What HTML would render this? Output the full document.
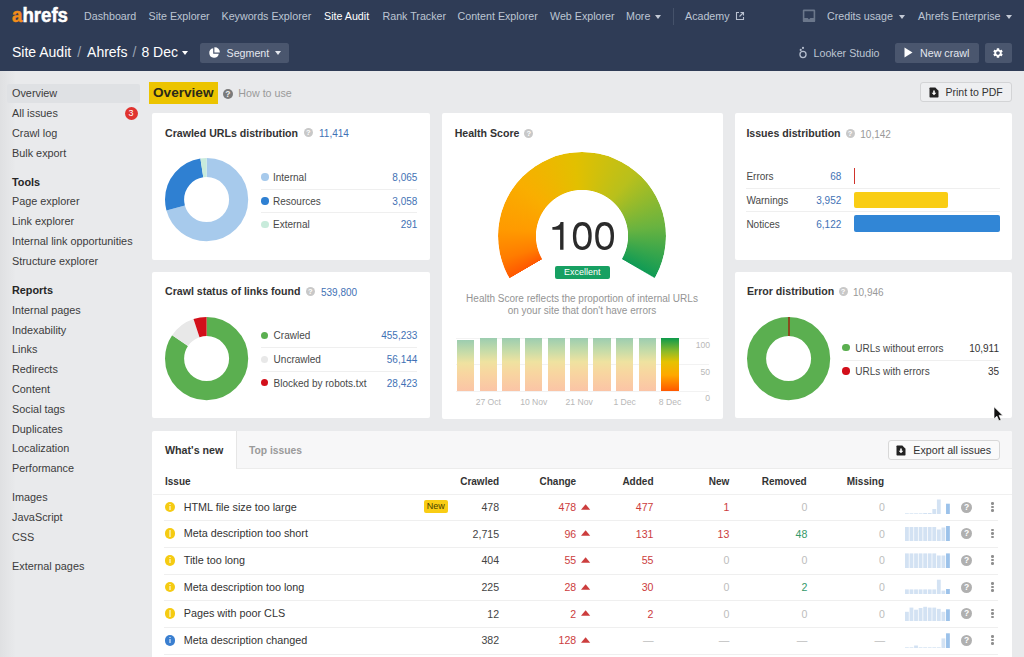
<!DOCTYPE html>
<html><head><meta charset="utf-8">
<style>
*{box-sizing:border-box;margin:0;padding:0}
html,body{width:1024px;height:657px;overflow:hidden}
body{position:relative;background:#e9eaec;font-family:"Liberation Sans",sans-serif;color:#333}
.a{position:absolute;white-space:nowrap}
#hdr{position:absolute;left:0;top:0;width:1024px;height:71px;background:#2f3c56}
.nav{position:absolute;top:10px;font-size:10.7px;color:#bdc5d3;line-height:13px}
.nav.w{color:#fff}
.car{display:inline-block;width:0;height:0;border-left:3px solid transparent;border-right:3px solid transparent;border-top:4px solid #c4cad6;vertical-align:middle}
.btn{position:absolute;background:#46536b;border-radius:2.5px}
.sb{position:absolute;left:12px;font-size:10.85px;color:#3c3c3c;line-height:14px}
.sb.b{font-weight:bold;color:#262626}
.card{position:absolute;background:#fff;border-radius:2px}
.ttl{position:absolute;font-size:10.6px;font-weight:bold;color:#333;line-height:13px}
.q{position:absolute;width:9px;height:9px;border-radius:50%;background:#c8c8c8;color:#fff;font-size:7.5px;font-weight:bold;text-align:center;line-height:9px}
.num{position:absolute;font-size:10px;color:#3f72b5;line-height:12px}
.lg{position:absolute;font-size:10px;color:#484848;line-height:12px}
.dot{position:absolute;width:7.4px;height:7.4px;border-radius:50%}
.sep{position:absolute;height:1px;background:#efefef}
</style></head><body>
<div class="a" style="left:0;top:71px;width:16px;height:586px;background:linear-gradient(90deg,#dfe0e2,rgba(233,234,236,0))"></div>
<div id="hdr">
<svg class="a" style="left:0;top:0" width="80" height="30"><text x="12" y="22" textLength="56" lengthAdjust="spacingAndGlyphs" font-family="Liberation Sans" font-weight="bold" font-size="20" fill="#fff" stroke="#fff" stroke-width="0.5"><tspan fill="#f28c1a" stroke="#f28c1a">a</tspan>hrefs</text></svg>
<div class="nav a" style="left:84px">Dashboard</div>
<div class="nav a" style="left:148.5px">Site Explorer</div>
<div class="nav a" style="left:221.5px">Keywords Explorer</div>
<div class="nav a w" style="left:324px">Site Audit</div>
<div class="nav a" style="left:382.5px">Rank Tracker</div>
<div class="nav a" style="left:457.5px">Content Explorer</div>
<div class="nav a" style="left:550px">Web Explorer</div>
<div class="nav a" style="left:626px">More <span class="car" style="margin-left:2px"></span></div>
<div class="a" style="left:673px;top:8px;width:1px;height:17px;background:#45526a"></div>
<div class="nav a" style="left:685px">Academy</div>
<svg class="a" style="left:735px;top:11px" width="10" height="10" viewBox="0 0 10 10"><path d="M4 1.5H1.5V8.5H8.5V6" fill="none" stroke="#b9c1d0" stroke-width="1.1"/><path d="M5.5 1.5H8.5V4.5M8.5 1.5L4.5 5.5" fill="none" stroke="#b9c1d0" stroke-width="1.1"/></svg>
<svg class="a" style="left:802px;top:8.5px" width="14" height="14" viewBox="0 0 14 14"><rect x="0.8" y="0.5" width="12.4" height="12.6" rx="1.2" fill="#6b778b"/><path d="M2.4 2.2H11.6V9H8.3L7 10.4L5.7 9H2.4Z" fill="#2f3c56"/></svg>
<div class="nav a" style="left:827px">Credits usage</div>
<span class="car a" style="left:899px;top:15px"></span>
<div class="nav a" style="left:918px">Ahrefs Enterprise</div>
<span class="car a" style="left:1006px;top:15px"></span>
<div class="a" style="left:12px;top:43.6px;font-size:14px;color:#fff;line-height:17px">Site Audit<span style="color:#9aa3b3;margin:0 6px 0 6px">/</span>Ahrefs<span style="color:#9aa3b3;margin:0 5px">/</span>8 Dec</div>
<span class="car a" style="left:181.5px;top:50.5px;border-top-color:#fff"></span>
<div class="btn" style="left:200px;top:42.5px;width:89px;height:20px;background:#4a566e"></div>
<svg class="a" style="left:208px;top:47px" width="12" height="12" viewBox="0 0 12 12"><path d="M5.2 1.2A4.8 4.8 0 1 0 10.8 6.8H5.2Z" fill="#fff"/><path d="M6.4 0.2A5 5 0 0 1 11.8 5.6H6.4Z" fill="#fff"/></svg>
<div class="nav a" style="left:226.5px;top:46.7px;color:#e3e7ee">Segment</div>
<span class="car a" style="left:274.5px;top:51px;border-top-color:#e3e7ee"></span>
<svg class="a" style="left:795px;top:42px" width="16" height="18" viewBox="795 42 16 18"><circle cx="803" cy="54.5" r="3.05" fill="none" stroke="#b4bdcd" stroke-width="1.3"/><circle cx="800.7" cy="49.9" r="1.05" fill="#b4bdcd"/><circle cx="803" cy="47.9" r="1.05" fill="#b4bdcd"/></svg>
<div class="nav a" style="left:813.5px;top:46.7px">Looker Studio</div>
<div class="btn" style="left:895px;top:42.5px;width:83.5px;height:20px;background:#4a566e"></div>
<svg class="a" style="left:904px;top:47px" width="9" height="11" viewBox="0 0 9 11"><path d="M0.5 0.5L8.5 5.5L0.5 10.5Z" fill="#fff"/></svg>
<div class="nav a" style="left:920px;top:46.7px;color:#e3e7ee">New crawl</div>
<div class="btn" style="left:984.5px;top:42.5px;width:27px;height:20px;background:#4a566e"></div>
<svg class="a" style="left:992px;top:46.5px" width="12" height="12" viewBox="0 0 24 24"><path fill="#fff" d="M19.14 12.94c.04-.3.06-.61.06-.94 0-.32-.02-.64-.07-.94l2.03-1.58a.49.49 0 0 0 .12-.61l-1.92-3.32a.488.488 0 0 0-.59-.22l-2.39.96c-.5-.38-1.030-.7-1.62-.94l-.36-2.54a.484.484 0 0 0-.48-.41h-3.84c-.24 0-.43.17-.47.41l-.36 2.54c-.59.24-1.13.57-1.62.94l-2.390-.96c-.22-.08-.47 0-.59.22L2.74 8.87c-.12.21-.08.47.12.61l2.03 1.58c-.05.3-.09.63-.09.94s.02.64.07.94l-2.03 1.58a.49.49 0 0 0-.12.61l1.92 3.32c.12.22.37.29.59.22l2.39-.96c.5.38 1.03.7 1.62.94l.36 2.54c.05.24.24.41.48.41h3.84c.24 0 .44-.17.47-.41l.36-2.54c.59-.24 1.13-.56 1.62-.94l2.39.96c.22.08.47 0 .59-.22l1.92-3.32c.12-.22.07-.47-.12-.61l-2.010-1.58zM12 15.6c-1.98 0-3.6-1.62-3.6-3.6s1.62-3.6 3.6-3.6 3.6 1.62 3.6 3.6-1.62 3.6-3.6 3.6z"/></svg>
</div>
<div class="a" style="left:7px;top:83.5px;width:133px;height:19px;background:#dfe1e4;border-radius:2px"></div>
<div class="sb a" style="top:86.0px">Overview</div>
<div class="sb a" style="top:106.0px">All issues</div>
<div class="sb a" style="top:125.8px">Crawl log</div>
<div class="sb a" style="top:145.6px">Bulk export</div>
<div class="sb a b" style="top:174.5px">Tools</div>
<div class="sb a" style="top:194.3px">Page explorer</div>
<div class="sb a" style="top:214.3px">Link explorer</div>
<div class="sb a" style="top:234.0px">Internal link opportunities</div>
<div class="sb a" style="top:253.8px">Structure explorer</div>
<div class="sb a b" style="top:283.0px">Reports</div>
<div class="sb a" style="top:303.0px">Internal pages</div>
<div class="sb a" style="top:322.5px">Indexability</div>
<div class="sb a" style="top:342.3px">Links</div>
<div class="sb a" style="top:362.0px">Redirects</div>
<div class="sb a" style="top:382.0px">Content</div>
<div class="sb a" style="top:401.8px">Social tags</div>
<div class="sb a" style="top:421.5px">Duplicates</div>
<div class="sb a" style="top:441.3px">Localization</div>
<div class="sb a" style="top:461.0px">Performance</div>
<div class="sb a" style="top:490.3px">Images</div>
<div class="sb a" style="top:510.0px">JavaScript</div>
<div class="sb a" style="top:529.8px">CSS</div>
<div class="sb a" style="top:559.0px">External pages</div>
<div class="a" style="left:124.5px;top:106.5px;width:13px;height:13px;border-radius:50%;background:#e0332f;color:#fff;font-size:9px;text-align:center;line-height:13px">3</div>
<div class="a" style="left:149px;top:81.5px;width:69px;height:22px;background:#ecc400"></div>
<div class="a" style="left:153px;top:84.5px;font-size:13.6px;font-weight:bold;color:#2a2a1a;line-height:16px">Overview</div>
<div class="a" style="left:222.7px;top:88.5px;width:10.5px;height:10.5px;border-radius:50%;background:#7a7a7a;color:#eee;font-size:8.5px;font-weight:bold;text-align:center;line-height:10.5px">?</div>
<div class="a" style="left:238.3px;top:87px;font-size:10.7px;color:#9a9a9a;line-height:13px">How to use</div>
<div class="a" style="left:920px;top:82px;width:91.5px;height:20px;border:1px solid #d3d4d6;border-radius:3px;background:#eeeff1"></div>
<svg class="a" style="left:929px;top:87px" width="10" height="11" viewBox="0 0 10 11"><path d="M0.5 1.2Q0.5 0.5 1.2 0.5H6.3L9.5 3.7V9.8Q9.5 10.5 8.8 10.5H1.2Q0.5 10.5 0.5 9.8Z" fill="#222"/><path d="M4.2 3.5h1.6v2.3h1.6L5 8.3L2.6 5.8h1.6Z" fill="#fff"/></svg>
<div class="a" style="left:945.5px;top:85.5px;font-size:10.5px;color:#333;line-height:13px">Print to PDF</div>
<div class="card" style="left:152px;top:113px;width:278px;height:147px"></div>
<div class="card" style="left:152px;top:272px;width:278px;height:146px"></div>
<div class="card" style="left:442px;top:113px;width:280.5px;height:305.5px"></div>
<div class="card" style="left:734.5px;top:113px;width:277px;height:146.5px"></div>
<div class="card" style="left:734.5px;top:272px;width:277px;height:146px"></div>
<div class="card" style="left:152px;top:431px;width:859.5px;height:240px"></div>
<div class="ttl a" style="left:165px;top:126.7px">Crawled URLs distribution</div><div class="q" style="left:303.8px;top:128.4px">?</div><div class="num a" style="left:319px;top:128.2px;color:#3f72b5">11,414</div><svg class="a" style="left:163.20px;top:155.90px" width="87.20" height="87.20"><g transform="rotate(-90 43.60 43.60)"><circle cx="43.60" cy="43.60" r="32.050" fill="none" stroke="#a7caec" stroke-width="19.10" stroke-dasharray="142.290 201.376" stroke-dashoffset="0.000"/><circle cx="43.60" cy="43.60" r="32.050" fill="none" stroke="#2f80d2" stroke-width="19.10" stroke-dasharray="53.952 201.376" stroke-dashoffset="-142.290"/><circle cx="43.60" cy="43.60" r="32.050" fill="none" stroke="#c8ebdb" stroke-width="19.10" stroke-dasharray="5.134 201.376" stroke-dashoffset="-196.242"/></g></svg><div class="dot" style="left:261.3px;top:173.3px;background:#a7caec"></div><div class="lg a" style="left:273px;top:171.9px">Internal</div><div class="num a" style="left:317.4px;width:100px;text-align:right;top:171.9px;color:#3f72b5">8,065</div><div class="dot" style="left:261.3px;top:197.2px;background:#2f80d2"></div><div class="lg a" style="left:273px;top:195.8px">Resources</div><div class="num a" style="left:317.4px;width:100px;text-align:right;top:195.8px;color:#3f72b5">3,058</div><div class="dot" style="left:261.3px;top:220.8px;background:#c8ebdb"></div><div class="lg a" style="left:273px;top:219.4px">External</div><div class="num a" style="left:317.4px;width:100px;text-align:right;top:219.4px;color:#3f72b5">291</div><div class="sep" style="left:261px;top:188.5px;width:156px"></div><div class="sep" style="left:261px;top:212.0px;width:156px"></div><div class="ttl a" style="left:165px;top:285.2px">Crawl status of links found</div><div class="q" style="left:305.9px;top:286.9px">?</div><div class="num a" style="left:321px;top:286.7px;color:#3f72b5">539,800</div><svg class="a" style="left:162.90px;top:314.60px" width="87.20" height="87.20"><g transform="rotate(-90 43.60 43.60)"><circle cx="43.60" cy="43.60" r="32.050" fill="none" stroke="#5baf50" stroke-width="19.10" stroke-dasharray="169.828 201.376" stroke-dashoffset="0.000"/><circle cx="43.60" cy="43.60" r="32.050" fill="none" stroke="#e8e8e8" stroke-width="19.10" stroke-dasharray="20.945 201.376" stroke-dashoffset="-169.828"/><circle cx="43.60" cy="43.60" r="32.050" fill="none" stroke="#d20f1a" stroke-width="19.10" stroke-dasharray="10.603 201.376" stroke-dashoffset="-190.773"/></g></svg><div class="dot" style="left:261.1px;top:331.6px;background:#5baf50"></div><div class="lg a" style="left:273.6px;top:330.2px">Crawled</div><div class="num a" style="left:317.4px;width:100px;text-align:right;top:330.2px;color:#3f72b5">455,233</div><div class="dot" style="left:261.1px;top:355.6px;background:#e8e8e8"></div><div class="lg a" style="left:273.6px;top:354.2px">Uncrawled</div><div class="num a" style="left:317.4px;width:100px;text-align:right;top:354.2px;color:#3f72b5">56,144</div><div class="dot" style="left:261.1px;top:378.9px;background:#d20f1a"></div><div class="lg a" style="left:273.6px;top:377.5px">Blocked by robots.txt</div><div class="num a" style="left:317.4px;width:100px;text-align:right;top:377.5px;color:#3f72b5">28,423</div><div class="sep" style="left:261px;top:347.3px;width:156px"></div><div class="sep" style="left:261px;top:371.0px;width:156px"></div><div class="ttl a" style="left:454.7px;top:127.0px">Health Score</div><div class="q" style="left:524.4px;top:128.7px">?</div><div class="ttl a" style="left:746.4px;top:127.0px">Issues distribution</div><div class="q" style="left:845.5px;top:128.7px">?</div><div class="num a" style="left:860.3px;top:128.5px;color:#999">10,142</div><div class="lg a" style="left:746.4px;top:171.2px">Errors</div><div class="num a" style="left:741.3px;width:100px;text-align:right;top:171.2px">68</div><div class="lg a" style="left:746.4px;top:194.7px">Warnings</div><div class="num a" style="left:741.3px;width:100px;text-align:right;top:194.7px">3,952</div><div class="lg a" style="left:746.4px;top:218.5px">Notices</div><div class="num a" style="left:741.3px;width:100px;text-align:right;top:218.5px">6,122</div><div class="a" style="left:853.5px;top:168px;width:1.6px;height:16px;background:#d0342c"></div><div class="a" style="left:853.8px;top:191.7px;width:94.2px;height:16.1px;background:#f9cd14;border-radius:2px"></div><div class="a" style="left:853.8px;top:215.2px;width:145.8px;height:16.4px;background:#3186d6;border-radius:2px"></div><div class="sep" style="left:746px;top:188px;width:254px"></div><div class="sep" style="left:746px;top:211.4px;width:254px"></div><div class="ttl a" style="left:747px;top:285.2px">Error distribution</div><div class="q" style="left:838.5px;top:286.9px">?</div><div class="num a" style="left:853px;top:286.7px;color:#999">10,946</div><svg class="a" style="left:745.20px;top:314.60px" width="87.20" height="87.20"><g transform="rotate(-90 43.60 43.60)"><circle cx="43.60" cy="43.60" r="32.050" fill="none" stroke="#5baf50" stroke-width="19.10" stroke-dasharray="201.376 201.376" stroke-dashoffset="0.000"/></g></svg><div class="a" style="left:788px;top:316.6px;width:1.7px;height:19.2px;background:#8a4a1e"></div><div class="dot" style="left:842.3px;top:343.9px;background:#5baf50"></div><div class="lg a" style="left:855.2px;top:342.5px">URLs without errors</div><div class="num a" style="left:899.0px;width:100px;text-align:right;top:342.5px;color:#333">10,911</div><div class="dot" style="left:842.3px;top:367.4px;background:#d20f1a"></div><div class="lg a" style="left:855.2px;top:366.0px">URLs with errors</div><div class="num a" style="left:899.0px;width:100px;text-align:right;top:366.0px;color:#333">35</div><div class="sep" style="left:843px;top:359.5px;width:157px"></div>
<div class="a" style="left:497.7px;top:151.6px;width:168.8px;height:168.8px;border-radius:50%;
background:conic-gradient(from 240deg, #ff5800 0deg, #ff7c00 14deg, #ff9a00 35deg, #f9ae00 70deg, #e2c000 115deg, #b8c01c 160deg, #68b340 203deg, #109b55 239.6deg, rgba(16,155,85,0) 240.4deg, rgba(255,88,0,0) 359.6deg, #ff5800 360deg);
-webkit-mask:radial-gradient(circle closest-side, transparent 45.7px, #000 46.5px);mask:radial-gradient(circle closest-side, transparent 45.7px, #000 46.5px)"></div>
<svg class="a" style="left:540px;top:215px" width="85" height="42" viewBox="540 215 85 42"><path d="M552.4 227.1C556.6 227 560.1 225.6 560.5 222.1H563.5V249.8H560.1V229.7H552.4Z" fill="#2b2b2b"/><path d="M582.30 223.75C587.41 223.75 590.05 227.93 590.05 236.05C590.05 244.17 587.41 248.35 582.30 248.35C577.18 248.35 574.55 244.17 574.55 236.05C574.55 227.93 577.18 223.75 582.30 223.75Z" fill="none" stroke="#2b2b2b" stroke-width="3.3"/><path d="M604.60 223.75C609.72 223.75 612.35 227.93 612.35 236.05C612.35 244.17 609.72 248.35 604.60 248.35C599.49 248.35 596.85 244.17 596.85 236.05C596.85 227.93 599.49 223.75 604.60 223.75Z" fill="none" stroke="#2b2b2b" stroke-width="3.3"/></svg>
<div class="a" style="left:554.8px;top:265.5px;width:55px;height:13.5px;background:#17a062;border-radius:2px;color:#fff;font-size:9px;text-align:center;line-height:13.5px">Excellent</div>
<div class="a" style="left:442px;width:280px;top:293px;text-align:center;font-size:10px;color:#949494;line-height:12.2px;white-space:normal">Health Score reflects the proportion of internal URLs<br>on your site that don't have errors</div>
<div class="sep" style="left:456px;top:337.5px;width:253px;background:#f2f2f2"></div>
<div class="sep" style="left:456px;top:364px;width:253px;background:#f2f2f2"></div>
<div class="sep" style="left:456px;top:391px;width:253px;background:#f2f2f2"></div>
<div class="a" style="left:456.80px;top:340px;width:17.4px;height:51.2px;background:linear-gradient(#9ccdb0 0%, #c8dca8 25%, #efe2a0 45%, #f8d6a0 65%, #fbc4a6 100%)"></div>
<div class="a" style="left:479.52px;top:338px;width:17.4px;height:53.2px;background:linear-gradient(#9ccdb0 0%, #c8dca8 25%, #efe2a0 45%, #f8d6a0 65%, #fbc4a6 100%)"></div>
<div class="a" style="left:502.24px;top:338px;width:17.4px;height:53.2px;background:linear-gradient(#9ccdb0 0%, #c8dca8 25%, #efe2a0 45%, #f8d6a0 65%, #fbc4a6 100%)"></div>
<div class="a" style="left:524.96px;top:338px;width:17.4px;height:53.2px;background:linear-gradient(#9ccdb0 0%, #c8dca8 25%, #efe2a0 45%, #f8d6a0 65%, #fbc4a6 100%)"></div>
<div class="a" style="left:547.68px;top:338px;width:17.4px;height:53.2px;background:linear-gradient(#9ccdb0 0%, #c8dca8 25%, #efe2a0 45%, #f8d6a0 65%, #fbc4a6 100%)"></div>
<div class="a" style="left:570.40px;top:338px;width:17.4px;height:53.2px;background:linear-gradient(#9ccdb0 0%, #c8dca8 25%, #efe2a0 45%, #f8d6a0 65%, #fbc4a6 100%)"></div>
<div class="a" style="left:593.12px;top:338px;width:17.4px;height:53.2px;background:linear-gradient(#9ccdb0 0%, #c8dca8 25%, #efe2a0 45%, #f8d6a0 65%, #fbc4a6 100%)"></div>
<div class="a" style="left:615.84px;top:338px;width:17.4px;height:53.2px;background:linear-gradient(#9ccdb0 0%, #c8dca8 25%, #efe2a0 45%, #f8d6a0 65%, #fbc4a6 100%)"></div>
<div class="a" style="left:638.56px;top:338px;width:17.4px;height:53.2px;background:linear-gradient(#9ccdb0 0%, #c8dca8 25%, #efe2a0 45%, #f8d6a0 65%, #fbc4a6 100%)"></div>
<div class="a" style="left:661.28px;top:338px;width:17.4px;height:53.2px;background:linear-gradient(#0d9a4c 0%, #8cba2a 25%, #e6c200 45%, #ffa800 70%, #ff5800 100%)"></div>
<div class="a" style="left:458.3px;width:60px;text-align:center;top:396.5px;font-size:8.6px;color:#b8b8b8;line-height:10px">27 Oct</div><div class="a" style="left:503.8px;width:60px;text-align:center;top:396.5px;font-size:8.6px;color:#b8b8b8;line-height:10px">10 Nov</div><div class="a" style="left:549.2px;width:60px;text-align:center;top:396.5px;font-size:8.6px;color:#b8b8b8;line-height:10px">21 Nov</div><div class="a" style="left:594.7px;width:60px;text-align:center;top:396.5px;font-size:8.6px;color:#b8b8b8;line-height:10px">1 Dec</div><div class="a" style="left:640.1px;width:60px;text-align:center;top:396.5px;font-size:8.6px;color:#b8b8b8;line-height:10px">8 Dec</div><div class="a" style="left:660px;width:50px;text-align:right;top:340.3px;font-size:8.6px;color:#b8b8b8;line-height:10px">100</div><div class="a" style="left:660px;width:50px;text-align:right;top:366.7px;font-size:8.6px;color:#b8b8b8;line-height:10px">50</div><div class="a" style="left:660px;width:50px;text-align:right;top:393.0px;font-size:8.6px;color:#b8b8b8;line-height:10px">0</div>
<div class="a" style="left:236px;top:431px;width:775.5px;height:38px;background:#f7f7f8;border-bottom:1px solid #ececec;border-left:1px solid #e6e6e6;border-top-right-radius:2px"></div><div class="a" style="left:165px;top:444px;font-size:10.7px;font-weight:bold;color:#333;line-height:13px">What's new</div><div class="a" style="left:249px;top:444px;font-size:10.3px;font-weight:bold;color:#9a9a9a;line-height:13px">Top issues</div><div class="a" style="left:888px;top:440px;width:111.5px;height:19.5px;border:1px solid #d8d8d8;border-radius:3px;background:#fafafa"></div><svg class="a" style="left:896px;top:444.5px" width="10" height="11" viewBox="0 0 10 11"><path d="M0.5 1.2Q0.5 0.5 1.2 0.5H6.3L9.5 3.7V9.8Q9.5 10.5 8.8 10.5H1.2Q0.5 10.5 0.5 9.8Z" fill="#222"/><path d="M4.2 3.5h1.6v2.3h1.6L5 8.3L2.6 5.8h1.6Z" fill="#fff"/></svg><div class="a" style="left:913.3px;top:443.5px;font-size:10.7px;color:#333;line-height:13px">Export all issues</div><div class="a" style="left:165px;top:475.0px;font-size:10px;font-weight:bold;color:#333;line-height:13px">Issue</div><div class="a" style="left:419.1px;width:80px;text-align:right;top:475.0px;font-size:10px;font-weight:bold;color:#333;line-height:13px">Crawled</div><div class="a" style="left:496.2px;width:80px;text-align:right;top:475.0px;font-size:10px;font-weight:bold;color:#333;line-height:13px">Change</div><div class="a" style="left:573.5px;width:80px;text-align:right;top:475.0px;font-size:10px;font-weight:bold;color:#333;line-height:13px">Added</div><div class="a" style="left:649.3px;width:80px;text-align:right;top:475.0px;font-size:10px;font-weight:bold;color:#333;line-height:13px">New</div><div class="a" style="left:726.7px;width:80px;text-align:right;top:475.0px;font-size:10px;font-weight:bold;color:#333;line-height:13px">Removed</div><div class="a" style="left:804.0px;width:80px;text-align:right;top:475.0px;font-size:10px;font-weight:bold;color:#333;line-height:13px">Missing</div><div class="sep" style="left:152.5px;top:494px;width:859px;background:#f0f0f0"></div><div class="a" style="left:164.7px;top:501.7px;width:10.6px;height:10.6px;border-radius:50%;background:#f5cb12"></div><div class="a" style="left:169.3px;top:503.8px;width:1.3px;height:1.3px;background:rgba(255,255,255,.5)"></div><div class="a" style="left:169.3px;top:505.8px;width:1.3px;height:4.2px;background:rgba(255,255,255,.5)"></div><div class="a" style="left:183.7px;top:500.5px;font-size:10.8px;color:#333;line-height:13px">HTML file size too large</div><div class="a" style="left:423.5px;top:500.2px;width:24.3px;height:13.1px;background:#f9cd14;border-radius:2px;font-size:9px;color:#4a3f00;text-align:center;line-height:13px">New</div><div class="a" style="left:419.1px;width:80px;text-align:right;top:500.9px;font-size:10.6px;color:#444;line-height:13px">478</div><div class="a" style="left:496.2px;width:80px;text-align:right;top:500.9px;font-size:10.6px;color:#cc3d3d;line-height:13px">478</div><svg class="a" style="left:581.2px;top:503.7px" width="10" height="7"><path d="M0 5.8L4.6 0.3L9.2 5.8Z" fill="#cc3d3d"/></svg><div class="a" style="left:573.5px;width:80px;text-align:right;top:500.9px;font-size:10.6px;color:#cc3d3d;line-height:13px">477</div><div class="a" style="left:649.3px;width:80px;text-align:right;top:500.9px;font-size:10.6px;color:#cc3d3d;line-height:13px">1</div><div class="a" style="left:727.4px;width:80px;text-align:right;top:500.9px;font-size:10.6px;color:#bdbdbd;line-height:13px">0</div><div class="a" style="left:805.0px;width:80px;text-align:right;top:500.9px;font-size:10.6px;color:#bdbdbd;line-height:13px">0</div><svg class="a" style="left:900px;top:497.30px" width="56" height="18" viewBox="900 497.30 56 18"><rect x="905.00" y="513.60" width="3.8" height="0.7" fill="#d3e2f3"/><rect x="909.56" y="513.60" width="3.8" height="0.7" fill="#d3e2f3"/><rect x="914.12" y="513.60" width="3.8" height="0.7" fill="#d3e2f3"/><rect x="918.68" y="513.60" width="3.8" height="0.7" fill="#d3e2f3"/><rect x="923.24" y="513.30" width="3.8" height="1" fill="#d3e2f3"/><rect x="927.80" y="513.30" width="3.8" height="1" fill="#d3e2f3"/><rect x="932.36" y="509.30" width="3.8" height="5" fill="#d3e2f3"/><rect x="936.92" y="499.80" width="3.8" height="14.5" fill="#d3e2f3"/><rect x="946.04" y="504.00" width="3.8" height="10.3" fill="#9cc2ea"/></svg><div class="a" style="left:961px;top:501.5px;width:11px;height:11px;border-radius:50%;background:#b0b0b0;color:#fff;font-size:8.5px;font-weight:bold;text-align:center;line-height:11px">?</div><div class="a" style="left:991.3px;top:502.0px;width:2.5px;height:2.5px;border-radius:50%;background:#8f8f8f"></div><div class="a" style="left:991.3px;top:505.5px;width:2.5px;height:2.5px;border-radius:50%;background:#8f8f8f"></div><div class="a" style="left:991.3px;top:509.0px;width:2.5px;height:2.5px;border-radius:50%;background:#8f8f8f"></div><div class="sep" style="left:164px;top:520.2px;width:834px;background:#efefef"></div><div class="a" style="left:164.7px;top:528.4px;width:10.6px;height:10.6px;border-radius:50%;background:#f5cb12"></div><div class="a" style="left:169.3px;top:530.4px;width:1.3px;height:1.3px;background:rgba(255,255,255,.5)"></div><div class="a" style="left:169.3px;top:532.4px;width:1.3px;height:4.2px;background:rgba(255,255,255,.5)"></div><div class="a" style="left:183.7px;top:527.1px;font-size:10.8px;color:#333;line-height:13px">Meta description too short</div><div class="a" style="left:419.1px;width:80px;text-align:right;top:527.5px;font-size:10.6px;color:#444;line-height:13px">2,715</div><div class="a" style="left:496.2px;width:80px;text-align:right;top:527.5px;font-size:10.6px;color:#cc3d3d;line-height:13px">96</div><svg class="a" style="left:581.2px;top:530.4px" width="10" height="7"><path d="M0 5.8L4.6 0.3L9.2 5.8Z" fill="#cc3d3d"/></svg><div class="a" style="left:573.5px;width:80px;text-align:right;top:527.5px;font-size:10.6px;color:#cc3d3d;line-height:13px">131</div><div class="a" style="left:649.3px;width:80px;text-align:right;top:527.5px;font-size:10.6px;color:#cc3d3d;line-height:13px">13</div><div class="a" style="left:727.4px;width:80px;text-align:right;top:527.5px;font-size:10.6px;color:#35996a;line-height:13px">48</div><div class="a" style="left:805.0px;width:80px;text-align:right;top:527.5px;font-size:10.6px;color:#bdbdbd;line-height:13px">0</div><svg class="a" style="left:900px;top:523.95px" width="56" height="18" viewBox="900 523.95 56 18"><rect x="905.00" y="526.95" width="3.8" height="14" fill="#d3e2f3"/><rect x="909.56" y="526.95" width="3.8" height="14" fill="#d3e2f3"/><rect x="914.12" y="526.95" width="3.8" height="14" fill="#d3e2f3"/><rect x="918.68" y="526.95" width="3.8" height="14" fill="#d3e2f3"/><rect x="923.24" y="526.95" width="3.8" height="14" fill="#d3e2f3"/><rect x="927.80" y="526.95" width="3.8" height="14" fill="#d3e2f3"/><rect x="932.36" y="526.95" width="3.8" height="14" fill="#d3e2f3"/><rect x="936.92" y="529.45" width="3.8" height="11.5" fill="#d3e2f3"/><rect x="941.48" y="527.45" width="3.8" height="13.5" fill="#d3e2f3"/><rect x="946.04" y="525.95" width="3.8" height="15" fill="#9cc2ea"/></svg><div class="a" style="left:961px;top:528.1px;width:11px;height:11px;border-radius:50%;background:#b0b0b0;color:#fff;font-size:8.5px;font-weight:bold;text-align:center;line-height:11px">?</div><div class="a" style="left:991.3px;top:528.6px;width:2.5px;height:2.5px;border-radius:50%;background:#8f8f8f"></div><div class="a" style="left:991.3px;top:532.1px;width:2.5px;height:2.5px;border-radius:50%;background:#8f8f8f"></div><div class="a" style="left:991.3px;top:535.6px;width:2.5px;height:2.5px;border-radius:50%;background:#8f8f8f"></div><div class="sep" style="left:164px;top:546.9px;width:834px;background:#efefef"></div><div class="a" style="left:164.7px;top:555.0px;width:10.6px;height:10.6px;border-radius:50%;background:#f5cb12"></div><div class="a" style="left:169.3px;top:557.1px;width:1.3px;height:1.3px;background:rgba(255,255,255,.5)"></div><div class="a" style="left:169.3px;top:559.1px;width:1.3px;height:4.2px;background:rgba(255,255,255,.5)"></div><div class="a" style="left:183.7px;top:553.8px;font-size:10.8px;color:#333;line-height:13px">Title too long</div><div class="a" style="left:419.1px;width:80px;text-align:right;top:554.2px;font-size:10.6px;color:#444;line-height:13px">404</div><div class="a" style="left:496.2px;width:80px;text-align:right;top:554.2px;font-size:10.6px;color:#cc3d3d;line-height:13px">55</div><svg class="a" style="left:581.2px;top:557.0px" width="10" height="7"><path d="M0 5.8L4.6 0.3L9.2 5.8Z" fill="#cc3d3d"/></svg><div class="a" style="left:573.5px;width:80px;text-align:right;top:554.2px;font-size:10.6px;color:#cc3d3d;line-height:13px">55</div><div class="a" style="left:649.3px;width:80px;text-align:right;top:554.2px;font-size:10.6px;color:#bdbdbd;line-height:13px">0</div><div class="a" style="left:727.4px;width:80px;text-align:right;top:554.2px;font-size:10.6px;color:#bdbdbd;line-height:13px">0</div><div class="a" style="left:805.0px;width:80px;text-align:right;top:554.2px;font-size:10.6px;color:#bdbdbd;line-height:13px">0</div><svg class="a" style="left:900px;top:550.60px" width="56" height="18" viewBox="900 550.60 56 18"><rect x="905.00" y="553.00" width="3.8" height="14.6" fill="#d3e2f3"/><rect x="909.56" y="553.00" width="3.8" height="14.6" fill="#d3e2f3"/><rect x="914.12" y="553.00" width="3.8" height="14.6" fill="#d3e2f3"/><rect x="918.68" y="553.00" width="3.8" height="14.6" fill="#d3e2f3"/><rect x="923.24" y="553.00" width="3.8" height="14.6" fill="#d3e2f3"/><rect x="927.80" y="553.00" width="3.8" height="14.6" fill="#d3e2f3"/><rect x="932.36" y="553.00" width="3.8" height="14.6" fill="#d3e2f3"/><rect x="936.92" y="555.10" width="3.8" height="12.5" fill="#d3e2f3"/><rect x="941.48" y="555.10" width="3.8" height="12.5" fill="#d3e2f3"/><rect x="946.04" y="553.00" width="3.8" height="14.6" fill="#9cc2ea"/></svg><div class="a" style="left:961px;top:554.8px;width:11px;height:11px;border-radius:50%;background:#b0b0b0;color:#fff;font-size:8.5px;font-weight:bold;text-align:center;line-height:11px">?</div><div class="a" style="left:991.3px;top:555.3px;width:2.5px;height:2.5px;border-radius:50%;background:#8f8f8f"></div><div class="a" style="left:991.3px;top:558.8px;width:2.5px;height:2.5px;border-radius:50%;background:#8f8f8f"></div><div class="a" style="left:991.3px;top:562.3px;width:2.5px;height:2.5px;border-radius:50%;background:#8f8f8f"></div><div class="sep" style="left:164px;top:573.5px;width:834px;background:#efefef"></div><div class="a" style="left:164.7px;top:581.7px;width:10.6px;height:10.6px;border-radius:50%;background:#f5cb12"></div><div class="a" style="left:169.3px;top:583.8px;width:1.3px;height:1.3px;background:rgba(255,255,255,.5)"></div><div class="a" style="left:169.3px;top:585.8px;width:1.3px;height:4.2px;background:rgba(255,255,255,.5)"></div><div class="a" style="left:183.7px;top:580.5px;font-size:10.8px;color:#333;line-height:13px">Meta description too long</div><div class="a" style="left:419.1px;width:80px;text-align:right;top:580.9px;font-size:10.6px;color:#444;line-height:13px">225</div><div class="a" style="left:496.2px;width:80px;text-align:right;top:580.9px;font-size:10.6px;color:#cc3d3d;line-height:13px">28</div><svg class="a" style="left:581.2px;top:583.7px" width="10" height="7"><path d="M0 5.8L4.6 0.3L9.2 5.8Z" fill="#cc3d3d"/></svg><div class="a" style="left:573.5px;width:80px;text-align:right;top:580.9px;font-size:10.6px;color:#cc3d3d;line-height:13px">30</div><div class="a" style="left:649.3px;width:80px;text-align:right;top:580.9px;font-size:10.6px;color:#bdbdbd;line-height:13px">0</div><div class="a" style="left:727.4px;width:80px;text-align:right;top:580.9px;font-size:10.6px;color:#35996a;line-height:13px">2</div><div class="a" style="left:805.0px;width:80px;text-align:right;top:580.9px;font-size:10.6px;color:#bdbdbd;line-height:13px">0</div><svg class="a" style="left:900px;top:577.25px" width="56" height="18" viewBox="900 577.25 56 18"><rect x="905.00" y="589.65" width="3.8" height="4.6" fill="#d3e2f3"/><rect x="909.56" y="589.65" width="3.8" height="4.6" fill="#d3e2f3"/><rect x="914.12" y="589.65" width="3.8" height="4.6" fill="#d3e2f3"/><rect x="918.68" y="589.65" width="3.8" height="4.6" fill="#d3e2f3"/><rect x="923.24" y="589.65" width="3.8" height="4.6" fill="#d3e2f3"/><rect x="927.80" y="589.65" width="3.8" height="4.6" fill="#d3e2f3"/><rect x="932.36" y="589.65" width="3.8" height="4.6" fill="#d3e2f3"/><rect x="936.92" y="579.95" width="3.8" height="14.3" fill="#d3e2f3"/><rect x="941.48" y="590.85" width="3.8" height="3.4" fill="#d3e2f3"/><rect x="946.04" y="589.25" width="3.8" height="5" fill="#9cc2ea"/></svg><div class="a" style="left:961px;top:581.5px;width:11px;height:11px;border-radius:50%;background:#b0b0b0;color:#fff;font-size:8.5px;font-weight:bold;text-align:center;line-height:11px">?</div><div class="a" style="left:991.3px;top:582.0px;width:2.5px;height:2.5px;border-radius:50%;background:#8f8f8f"></div><div class="a" style="left:991.3px;top:585.5px;width:2.5px;height:2.5px;border-radius:50%;background:#8f8f8f"></div><div class="a" style="left:991.3px;top:589.0px;width:2.5px;height:2.5px;border-radius:50%;background:#8f8f8f"></div><div class="sep" style="left:164px;top:600.2px;width:834px;background:#efefef"></div><div class="a" style="left:164.7px;top:608.3px;width:10.6px;height:10.6px;border-radius:50%;background:#f5cb12"></div><div class="a" style="left:169.3px;top:610.4px;width:1.3px;height:1.3px;background:rgba(255,255,255,.5)"></div><div class="a" style="left:169.3px;top:612.4px;width:1.3px;height:4.2px;background:rgba(255,255,255,.5)"></div><div class="a" style="left:183.7px;top:607.1px;font-size:10.8px;color:#333;line-height:13px">Pages with poor CLS</div><div class="a" style="left:419.1px;width:80px;text-align:right;top:607.5px;font-size:10.6px;color:#444;line-height:13px">12</div><div class="a" style="left:496.2px;width:80px;text-align:right;top:607.5px;font-size:10.6px;color:#cc3d3d;line-height:13px">2</div><svg class="a" style="left:581.2px;top:610.3px" width="10" height="7"><path d="M0 5.8L4.6 0.3L9.2 5.8Z" fill="#cc3d3d"/></svg><div class="a" style="left:573.5px;width:80px;text-align:right;top:607.5px;font-size:10.6px;color:#cc3d3d;line-height:13px">2</div><div class="a" style="left:649.3px;width:80px;text-align:right;top:607.5px;font-size:10.6px;color:#bdbdbd;line-height:13px">0</div><div class="a" style="left:727.4px;width:80px;text-align:right;top:607.5px;font-size:10.6px;color:#bdbdbd;line-height:13px">0</div><div class="a" style="left:805.0px;width:80px;text-align:right;top:607.5px;font-size:10.6px;color:#bdbdbd;line-height:13px">0</div><svg class="a" style="left:900px;top:603.90px" width="56" height="18" viewBox="900 603.90 56 18"><rect x="905.00" y="611.70" width="3.8" height="9.2" fill="#d3e2f3"/><rect x="909.56" y="607.50" width="3.8" height="13.4" fill="#d3e2f3"/><rect x="914.12" y="609.60" width="3.8" height="11.3" fill="#d3e2f3"/><rect x="918.68" y="607.90" width="3.8" height="13" fill="#d3e2f3"/><rect x="923.24" y="606.70" width="3.8" height="14.2" fill="#d3e2f3"/><rect x="927.80" y="607.50" width="3.8" height="13.4" fill="#d3e2f3"/><rect x="932.36" y="607.50" width="3.8" height="13.4" fill="#d3e2f3"/><rect x="936.92" y="608.80" width="3.8" height="12.1" fill="#d3e2f3"/><rect x="941.48" y="611.70" width="3.8" height="9.2" fill="#d3e2f3"/><rect x="946.04" y="609.20" width="3.8" height="11.7" fill="#9cc2ea"/></svg><div class="a" style="left:961px;top:608.1px;width:11px;height:11px;border-radius:50%;background:#b0b0b0;color:#fff;font-size:8.5px;font-weight:bold;text-align:center;line-height:11px">?</div><div class="a" style="left:991.3px;top:608.6px;width:2.5px;height:2.5px;border-radius:50%;background:#8f8f8f"></div><div class="a" style="left:991.3px;top:612.1px;width:2.5px;height:2.5px;border-radius:50%;background:#8f8f8f"></div><div class="a" style="left:991.3px;top:615.6px;width:2.5px;height:2.5px;border-radius:50%;background:#8f8f8f"></div><div class="sep" style="left:164px;top:626.8px;width:834px;background:#efefef"></div><div class="a" style="left:164.7px;top:635.0px;width:10.6px;height:10.6px;border-radius:50%;background:#3a7fd0"></div><div class="a" style="left:169.3px;top:637.0px;width:1.3px;height:1.3px;background:rgba(255,255,255,.5)"></div><div class="a" style="left:169.3px;top:639.0px;width:1.3px;height:4.2px;background:rgba(255,255,255,.5)"></div><div class="a" style="left:183.7px;top:633.8px;font-size:10.8px;color:#333;line-height:13px">Meta description changed</div><div class="a" style="left:419.1px;width:80px;text-align:right;top:634.1px;font-size:10.6px;color:#444;line-height:13px">382</div><div class="a" style="left:496.2px;width:80px;text-align:right;top:634.1px;font-size:10.6px;color:#cc3d3d;line-height:13px">128</div><svg class="a" style="left:581.2px;top:637.0px" width="10" height="7"><path d="M0 5.8L4.6 0.3L9.2 5.8Z" fill="#cc3d3d"/></svg><div class="a" style="left:573.5px;width:80px;text-align:right;top:634.1px;font-size:10.6px;color:#bdbdbd;line-height:13px">—</div><div class="a" style="left:649.3px;width:80px;text-align:right;top:634.1px;font-size:10.6px;color:#bdbdbd;line-height:13px">—</div><div class="a" style="left:727.4px;width:80px;text-align:right;top:634.1px;font-size:10.6px;color:#bdbdbd;line-height:13px">—</div><div class="a" style="left:805.0px;width:80px;text-align:right;top:634.1px;font-size:10.6px;color:#bdbdbd;line-height:13px">—</div><svg class="a" style="left:900px;top:630.55px" width="56" height="18" viewBox="900 630.55 56 18"><rect x="905.00" y="646.85" width="3.8" height="0.7" fill="#d3e2f3"/><rect x="909.56" y="646.85" width="3.8" height="0.7" fill="#d3e2f3"/><rect x="914.12" y="645.05" width="3.8" height="2.5" fill="#d3e2f3"/><rect x="918.68" y="646.85" width="3.8" height="0.7" fill="#d3e2f3"/><rect x="923.24" y="646.85" width="3.8" height="0.7" fill="#d3e2f3"/><rect x="927.80" y="646.85" width="3.8" height="0.7" fill="#d3e2f3"/><rect x="932.36" y="646.85" width="3.8" height="0.7" fill="#d3e2f3"/><rect x="936.92" y="646.85" width="3.8" height="0.7" fill="#d3e2f3"/><rect x="941.48" y="637.95" width="3.8" height="9.6" fill="#d3e2f3"/><rect x="946.04" y="632.85" width="3.8" height="14.7" fill="#9cc2ea"/></svg><div class="a" style="left:961px;top:634.8px;width:11px;height:11px;border-radius:50%;background:#b0b0b0;color:#fff;font-size:8.5px;font-weight:bold;text-align:center;line-height:11px">?</div><div class="a" style="left:991.3px;top:635.2px;width:2.5px;height:2.5px;border-radius:50%;background:#8f8f8f"></div><div class="a" style="left:991.3px;top:638.8px;width:2.5px;height:2.5px;border-radius:50%;background:#8f8f8f"></div><div class="a" style="left:991.3px;top:642.2px;width:2.5px;height:2.5px;border-radius:50%;background:#8f8f8f"></div><div class="sep" style="left:164px;top:653.5px;width:834px;background:#efefef"></div><svg class="a" style="left:992.8px;top:405.6px" width="11" height="16" viewBox="0 0 10 15"><path d="M0.8 0.8V12L3.5 9.5L5.4 13.9L7.4 13.1L5.5 8.8H9Z" fill="#111" stroke="#fff" stroke-width="0.6"/></svg>
</body></html>
